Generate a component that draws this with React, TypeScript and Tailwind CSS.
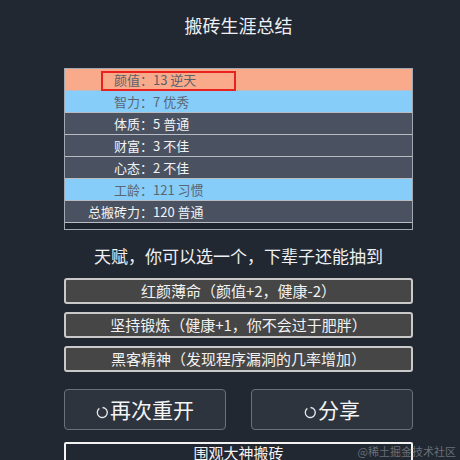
import React from 'react'

const FONT = { fontFamily: '"Noto Sans CJK SC", "Liberation Sans", sans-serif' }

interface Stat {
  label: string
  value: string
  tone: 'peach' | 'blue' | 'dark'
}

const stats: Stat[] = [
  { label: '颜值', value: '13 逆天', tone: 'peach' },
  { label: '智力', value: '7 优秀', tone: 'blue' },
  { label: '体质', value: '5 普通', tone: 'dark' },
  { label: '财富', value: '3 不佳', tone: 'dark' },
  { label: '心态', value: '2 不佳', tone: 'dark' },
  { label: '工龄', value: '121 习惯', tone: 'blue' },
  { label: '总搬砖力', value: '120 普通', tone: 'dark' },
]

const talents = [
  '红颜薄命（颜值+2，健康-2）',
  '坚持锻炼（健康+1，你不会过于肥胖）',
  '黑客精神（发现程序漏洞的几率增加）',
]

function RestartIcon() {
  return (
    <svg width="13" height="13" viewBox="0 0 13 13" className="mr-[1px] mt-[5px]">
      <path
        d="M3.4 2.4 A5 5 0 1 0 6.5 1.5"
        fill="none"
        stroke="#e5e7eb"
        strokeWidth="1.3"
      />
    </svg>
  )
}

export default function App() {
  return (
    <div className="relative w-[460px] h-[460px] overflow-hidden bg-[#222832]" style={FONT}>
      <div className="ml-[64px] w-[349px] flex flex-col">
        {/* Title */}
        <h1 className="mt-[12px] h-[26px] text-center text-[18px] leading-[26px] text-[#eef0f3]">
          搬砖生涯总结
        </h1>

        {/* Stats panel */}
        <div className="relative mt-[30px] border border-[#a3a9b2] bg-[#1d232c]">
          {stats.map((s) => (
            <div
              key={s.label}
              className={
                s.tone === 'peach'
                  ? 'flex h-[22px] items-center border-b border-[#b9bcc2] bg-[#f8aa8b] text-[#5c606a]'
                  : s.tone === 'blue'
                    ? 'flex h-[22px] items-center border-b border-[#b9bcc2] bg-[#87cdfa] text-[#5a6672]'
                    : 'flex h-[22px] items-center border-b border-[#b9bcc2] bg-[#4a5261] text-[#f2f3f5]'
              }
            >
              <span className="w-[88px] text-right text-[13px] leading-[20px]">{s.label}：</span>
              <span className="text-[13px] leading-[20px]">{s.value}</span>
            </div>
          ))}
          <div className="h-[6px]" />
          {/* highlight box */}
          <div className="absolute left-[36px] top-[2px] h-[20px] w-[135px] border-2 border-[#e8231f]" />
        </div>

        {/* Talents */}
        <p className="mt-[14px] h-[24px] text-center text-[17px] leading-[24px] text-[#eef0f3]">
          天赋，你可以选一个，下辈子还能抽到
        </p>
        <div className="mt-[10px] flex flex-col gap-[8px]">
          {talents.map((t) => (
            <button
              key={t}
              className="h-[26px] rounded-[3px] border-2 border-[#c9c9c9] bg-[#464646] text-center text-[15px] leading-[20px] text-[#f2f2f2]"
            >
              {t}
            </button>
          ))}
        </div>

        {/* Actions */}
        <div className="mt-[17px] flex justify-between">
          <button className="flex h-[41px] w-[162px] items-center justify-center rounded-[4px] border border-[#6b717b] bg-[#2e343e] text-[21px] text-[#f4f4f5]">
            <RestartIcon />
            再次重开
          </button>
          <button className="flex h-[41px] w-[162px] items-center justify-center rounded-[4px] border border-[#6b717b] bg-[#2e343e] text-[21px] text-[#f4f4f5]">
            <RestartIcon />
            分享
          </button>
        </div>
        <button className="mt-[12px] h-[30px] rounded-[2px] border-2 border-[#f2f2f2] bg-[#222832] pb-[8px] text-[15px] leading-[18px] text-[#f2f2f2]">
          围观大神搬砖
        </button>
      </div>

      {/* watermark */}
      <span className="absolute right-[4px] top-[443px] text-[11px] leading-[16px] text-[#8a8f98]/70">
        @稀土掘金技术社区
      </span>
    </div>
  )
}
